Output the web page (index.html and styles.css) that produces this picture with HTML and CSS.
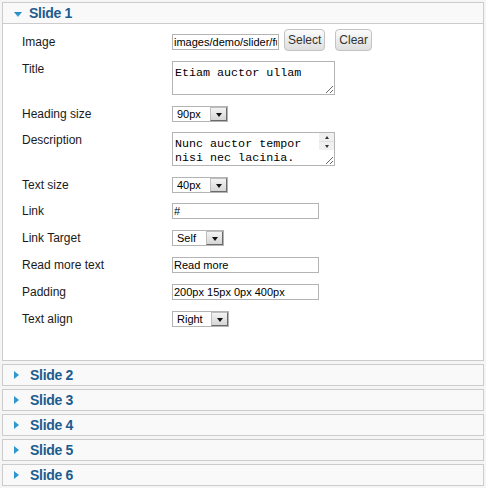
FILE: index.html
```html
<!DOCTYPE html>
<html>
<head>
<meta charset="utf-8">
<link rel="stylesheet" href="styles.css">
</head>
<body>
<div class="accordion">
  <section class="panel open">
    <div class="panel-head">
      <span class="tri"><svg width="8" height="5" viewBox="0 0 8 5"><defs><linearGradient id="gd" x1="0" y1="0" x2="0" y2="1"><stop offset="0" stop-color="#1f86c0"/><stop offset="1" stop-color="#49addf"/></linearGradient></defs><path d="M0 0H8L4 5Z" fill="url(#gd)"/></svg></span>
      <span class="panel-title">Slide 1</span>
    </div>
    <div class="panel-body">
      <div class="row">
        <label>Image</label>
        <div class="field">
          <input class="txt w-img" type="text" value="images/demo/slider/full/slide1.jpg">
          <button class="btn">Select</button>
          <button class="btn btn-clear">Clear</button>
        </div>
      </div>
      <div class="row">
        <label>Title</label>
        <div class="field"><textarea class="area">Etiam auctor ullam</textarea></div>
      </div>
      <div class="row tight">
        <label>Heading size</label>
        <div class="field"><div class="sel w56"><select><option>90px</option></select><span class="arrow"></span></div></div>
      </div>
      <div class="row">
        <label>Description</label>
        <div class="field">
          <div class="area-wrap">
            <textarea class="area scroll">Nunc auctor tempor nisi nec lacinia. Donec et elit sed lorem dapibus.</textarea>
            <div class="fake-scroll"><span class="sb-btn up"></span><span class="sb-btn down"></span></div>
          </div>
        </div>
      </div>
      <div class="row tight">
        <label>Text size</label>
        <div class="field"><div class="sel w56"><select><option>40px</option></select><span class="arrow"></span></div></div>
      </div>
      <div class="row">
        <label>Link</label>
        <div class="field"><input class="txt w-long" type="text" value="#"></div>
      </div>
      <div class="row">
        <label>Link Target</label>
        <div class="field"><div class="sel w52"><select><option>Self</option></select><span class="arrow"></span></div></div>
      </div>
      <div class="row">
        <label>Read more text</label>
        <div class="field"><input class="txt w-long" type="text" value="Read more"></div>
      </div>
      <div class="row">
        <label>Padding</label>
        <div class="field"><input class="txt w-long" type="text" value="200px 15px 0px 400px"></div>
      </div>
      <div class="row">
        <label>Text align</label>
        <div class="field"><div class="sel w57"><select><option>Right</option></select><span class="arrow"></span></div></div>
      </div>
    </div>
  </section>
  <section class="panel"><div class="panel-head"><span class="tri"><svg width="5" height="8" viewBox="0 0 5 8"><path d="M0 0L5 4L0 8Z" fill="#2e97cf"/></svg></span><span class="panel-title">Slide 2</span></div></section>
  <section class="panel"><div class="panel-head"><span class="tri"><svg width="5" height="8" viewBox="0 0 5 8"><path d="M0 0L5 4L0 8Z" fill="#2e97cf"/></svg></span><span class="panel-title">Slide 3</span></div></section>
  <section class="panel"><div class="panel-head"><span class="tri"><svg width="5" height="8" viewBox="0 0 5 8"><path d="M0 0L5 4L0 8Z" fill="#2e97cf"/></svg></span><span class="panel-title">Slide 4</span></div></section>
  <section class="panel"><div class="panel-head"><span class="tri"><svg width="5" height="8" viewBox="0 0 5 8"><path d="M0 0L5 4L0 8Z" fill="#2e97cf"/></svg></span><span class="panel-title">Slide 5</span></div></section>
  <section class="panel"><div class="panel-head"><span class="tri"><svg width="5" height="8" viewBox="0 0 5 8"><path d="M0 0L5 4L0 8Z" fill="#2e97cf"/></svg></span><span class="panel-title">Slide 6</span></div></section>
</div>
</body>
</html>
```

FILE: styles.css
```css
html {
  margin: 0;
  padding: 0;
  background: #f5f5f5;
}
body {
  margin: 2px;
  font-family: "Liberation Sans", Arial, sans-serif;
  color: #1a1a1a;
}
.panel {
  border: 1px solid #cccccc;
  background: #ffffff;
  margin-bottom: 3px;
}
.panel-head {
  height: 20px;
  background: #f9f9f9;
  display: flex;
  align-items: center;
  padding-left: 11px;
}
.open .panel-head {
  border-bottom: 1px solid #cccccc;
}
.tri {
  width: 16px;
  flex: none;
  display: flex;
  align-items: center;
}
.open .tri {
  width: 15px;
  margin-top: 2px;
}
.panel-title {
  font-size: 14px;
  font-weight: bold;
  letter-spacing: -0.3px;
  color: #1d5c8e;
  line-height: 20px;
}
.panel-body {
  padding: 10px 0 22px 19px;
}
.row {
  display: flex;
  margin-bottom: 11px;
}
.row.tight {
  margin-bottom: 10px;
}
.row label {
  width: 150px;
  flex: none;
  font-size: 12px;
  line-height: 16px;
  color: #1a1a1a;
}
.field {
  display: flex;
  align-items: flex-start;
}
.txt {
  height: 16px;
  box-sizing: border-box;
  border: 1px solid #b4b4b4;
  padding: 0 1px;
  margin: 0;
  font: 11px "Liberation Sans", Arial, sans-serif;
  color: #000;
  background: #fff;
  outline: none;
}
.w-img { width: 107px; }
.w-long { width: 147px; }
.btn {
  height: 22px;
  box-sizing: border-box;
  border: 1px solid #c3c3c3;
  border-radius: 4px;
  background: linear-gradient(#fbfbfb, #dedede);
  font: 12px "Liberation Sans", Arial, sans-serif;
  color: #333;
  padding: 0 3px;
  margin: -5px 0 -1px 5px;
}
.btn-clear {
  margin-left: 10px;
}
.area {
  display: block;
  width: 163px;
  height: 34px;
  box-sizing: border-box;
  border: 1px solid #b4b4b4;
  padding: 4px 2px 0;
  margin: 0;
  font: 11.7px/14px "Liberation Mono", "Courier New", monospace;
  color: #000;
  overflow: hidden;
  outline: none;
}
.area.scroll {
  padding-right: 17px;
}
.area-wrap {
  position: relative;
}
.fake-scroll {
  position: absolute;
  top: 1px;
  right: 1px;
  width: 15px;
  display: flex;
  flex-direction: column;
  background: #f0f0f0;
}
.sb-btn {
  height: 8px;
  display: flex;
  align-items: center;
  justify-content: center;
}
.sb-btn.up::before {
  content: "";
  border-left: 2.5px solid transparent;
  border-right: 2.5px solid transparent;
  border-bottom: 3px solid #333;
}
.sb-btn.down {
  border-top: 1px solid #e0e0e0;
}
.sb-btn.down::before {
  content: "";
  border-left: 2.5px solid transparent;
  border-right: 2.5px solid transparent;
  border-top: 3px solid #333;
}
.sel {
  display: flex;
  height: 16px;
  box-sizing: border-box;
  border: 1px solid #b4b4b4;
  background: #fff;
}
.w56 { width: 56px; }
.w52 { width: 52px; }
.w57 { width: 57px; }
.sel select {
  flex: 1;
  min-width: 0;
  appearance: none;
  -webkit-appearance: none;
  border: 0;
  background: transparent;
  font: 11px "Liberation Sans", Arial, sans-serif;
  color: #000;
  padding: 0 0 0 4px;
  margin: 0;
  height: 14px;
  outline: none;
}
.arrow {
  width: 17px;
  flex: none;
  box-sizing: border-box;
  border: 1px solid;
  border-color: #bdbdbd #6a6a6a #6a6a6a #bdbdbd;
  background: linear-gradient(#f3f3f3, #d6d6d6);
  display: flex;
  align-items: flex-end;
  justify-content: center;
  padding-bottom: 3px;
}
.arrow::before {
  content: "";
  border-left: 3.5px solid transparent;
  border-right: 3.5px solid transparent;
  border-top: 4px solid #111;
}
```
